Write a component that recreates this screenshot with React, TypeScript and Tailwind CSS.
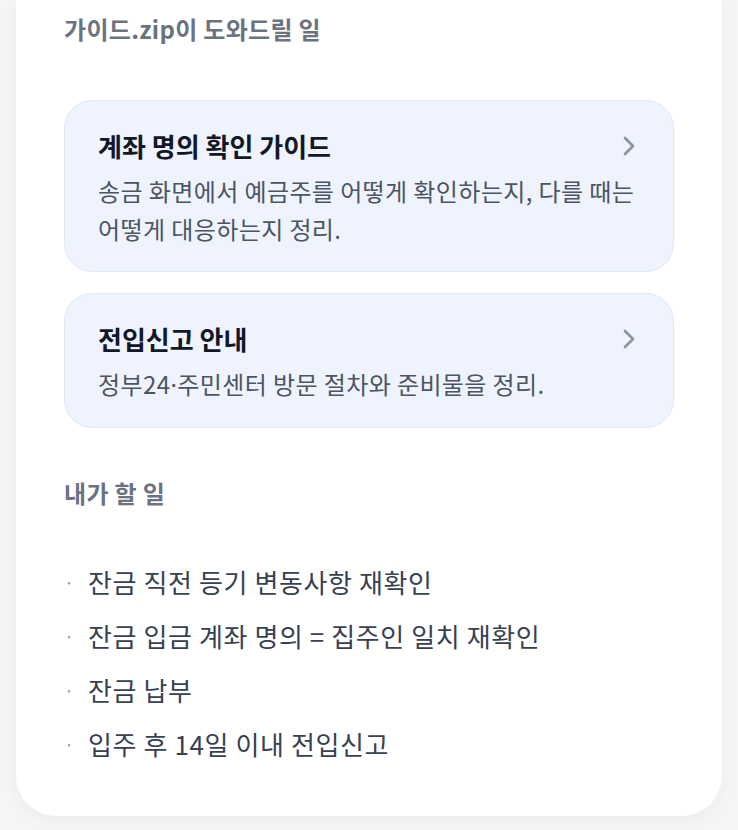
import React from "react";

const font = { fontFamily: '"Noto Sans CJK KR", "Noto Sans", sans-serif' };

function Chevron() {
  return (
    <svg width="32" height="32" viewBox="0 0 24 24" fill="none" stroke="currentColor" strokeWidth="2" strokeLinecap="round" strokeLinejoin="round" className="text-[#8b94a3] shrink-0">
      <path d="m9 18 6-6-6-6" />
    </svg>
  );
}

function GuideCard({ title, desc }: { title: React.ReactNode; desc: React.ReactNode }) {
  return (
    <div className="rounded-[28px] border border-[#dfe8fb] bg-[#eef3fe] pl-[33px] pr-[32px] pt-[26px] pb-[23px]">
      <div className="flex items-center justify-between">
        <div className="text-[26px] font-bold leading-[38px] text-[#111827]">{title}</div>
        <div className="-mr-[4px]">
          <Chevron />
        </div>
      </div>
      <div className="mt-[7px] break-keep text-[24px] leading-[38px] tracking-[0.4px] text-[#4b5563]">{desc}</div>
    </div>
  );
}

export default function App() {
  const todos = [
    "잔금 직전 등기 변동사항 재확인",
    "잔금 입금 계좌 명의 = 집주인 일치 재확인",
    "잔금 납부",
    "입주 후 14일 이내 전입신고",
  ];
  return (
    <div className="min-h-screen bg-[#f4f5f7] pb-[15px]" style={font}>
      <div className="mx-4 rounded-b-[40px] bg-white px-12 pt-[13px] pb-[45px] shadow-[0_4px_16px_rgba(0,0,0,0.04)]">
        <div className="text-[24px] font-bold leading-[32px] tracking-[0.3px] text-[#6b7280]">가이드.zip이 도와드릴 일</div>
        <div className="mt-[55px] flex flex-col gap-[21px]">
          <GuideCard
            title="계좌 명의 확인 가이드"
            desc="송금 화면에서 예금주를 어떻게 확인하는지, 다를 때는 어떻게 대응하는지 정리."
          />
          <GuideCard
            title="전입신고 안내"
            desc={
              <>
                정부24<span style={{ fontFamily: '"Noto Sans", sans-serif' }}>·</span>주민센터 방문 절차와 준비물을 정리.
              </>
            }
          />
        </div>
        <div className="mt-[49px] text-[24px] font-bold leading-[32px] tracking-[0.3px] text-[#6b7280]">내가 할 일</div>
        <ul className="mt-[46px]">
          {todos.map((t) => (
            <li key={t} className="flex items-center text-[26px] leading-[54px] tracking-[0.6px] text-[#374151]">
              <span className="w-6 text-[18px] text-gray-400">·</span>
              <span>{t}</span>
            </li>
          ))}
        </ul>
      </div>
    </div>
  );
}
